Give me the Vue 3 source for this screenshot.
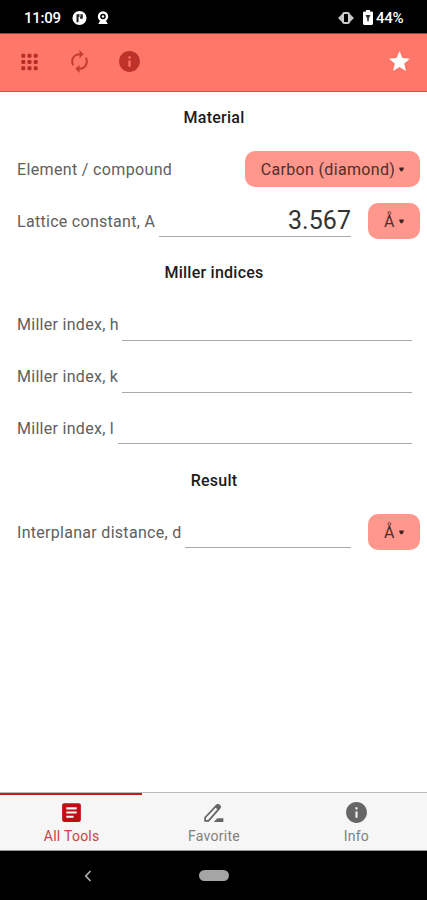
<script setup>
const rows = [
  { kind: 'title', label: 'Material' },
  { kind: 'select', label: 'Element / compound', unit: 'Carbon (diamond)' },
  { kind: 'field', label: 'Lattice constant, A', value: '3.567', unit: 'Å' },
  { kind: 'title', label: 'Miller indices' },
  { kind: 'field', label: 'Miller index, h' },
  { kind: 'field', label: 'Miller index, k' },
  { kind: 'field', label: 'Miller index, l' },
  { kind: 'title', label: 'Result' },
  { kind: 'field', label: 'Interplanar distance, d', unit: 'Å' }
]
</script>

<template>
  <div class="screen">
    <div class="status">
      <span class="time">11:09</span>
      <svg class="s1" width="15" height="16" viewBox="0 0 16 16"><circle cx="8" cy="8" r="7.500" fill="#fff" /><path d="M4.800 4h6.700v4.800H8.600V6.600H7V12.500H4.800z" fill="#222" /><path d="M8 4h1v2.600H8z" fill="#fff" /></svg>
      <svg class="s2" width="12" height="14" viewBox="0 0 12 14"><circle cx="6" cy="5.500" r="4" fill="none" stroke="#fff" stroke-width="2.400" /><circle cx="6" cy="5.500" r="1.200" fill="#fff" /><path d="M1.200 12.900 3 10h6l1.800 2.900z" fill="#fff" /></svg>
      <span class="grow"></span>
      <svg class="s3" width="16" height="12" viewBox="0 0 16 12"><path d="M0 6 4.500 1.500v9zM16 6l-4.500-4.500v9z" fill="#c4c4c4" /><rect x="5" y="1" width="6" height="10" rx="1.500" fill="#000" stroke="#ccc" stroke-width="2" /></svg>
      <svg class="s4" width="10" height="15" viewBox="0 0 10 15"><path d="M3 0h4v1.600h1.800q1.200 0 1.200 1.200v10.800Q10 15 8.800 15H1.200Q0 15 0 13.600V2.800q0-1.200 1.200-1.200H3z" fill="#fff" /><path d="M2.500 5h5L5.800 8.600v2.600H4.200V8.600z" fill="#333" /></svg>
      <span class="battery">44%</span>
    </div>

    <header class="bar">
      <svg width="25" height="24" viewBox="0 0 24 24" fill="#b72c24"><template v-for="y in 3" :key="y"><rect v-for="x in 3" :key="x" :x="x * 6.200 - 2.400" :y="y * 6.200 - 2.400" width="4" height="4" rx="1.200" /></template></svg>
      <svg width="25" height="25" viewBox="0 0 24 24" fill="#c63d33"><path d="M12 6v3l4-4-4-4v3c-4.420 0-8 3.580-8 8 0 1.570.46 3.030 1.240 4.260L6.700 14.800c-.45-.83-.7-1.790-.7-2.800 0-3.310 2.690-6 6-6zm6.760 1.740L17.300 9.200c.44.84.7 1.790.7 2.800 0 3.310-2.690 6-6 6v-3l-4 4 4 4v-3c4.420 0 8-3.580 8-8 0-1.570-.46-3.030-1.240-4.260z" /></svg>
      <svg width="25" height="25" viewBox="0 0 24 24" fill="#be3329"><path d="M12 2C6.480 2 2 6.480 2 12s4.480 10 10 10 10-4.480 10-10S17.520 2 12 2zm1 15h-2v-6h2v6zm0-8h-2V7h2v2z" /></svg>
      <span class="grow"></span>
      <svg width="25" height="25" viewBox="0 0 24 24" fill="#fff"><path d="M12 17.270 18.180 21l-1.640-7.030L22 9.240l-7.190-.61L12 2 9.190 8.630 2 9.240l5.460 4.730L5.820 21z" /></svg>
    </header>

    <main>
      <div v-for="row in rows" :key="row.label" class="row" :class="[row.kind, { wide: !row.unit }]">
        <span class="label">{{ row.label }}</span>
        <span v-if="row.kind === 'field'" class="input">{{ row.value }}</span>
        <button v-if="row.unit" class="chip" :class="{ big: row.kind === 'select' }">{{ row.unit }}<svg width="5" height="5" viewBox="0 0 5 5"><path d="M.3.500h4.400v1.500L3.300 4.200H1.700L.3 2z" fill="#40201e" /></svg></button>
      </div>
    </main>

    <nav>
      <div class="tab active">
        <svg width="25" height="25" viewBox="0 0 24 24"><path d="M19 3H5c-1.100 0-2 .9-2 2v14c0 1.100.9 2 2 2h14c1.100 0 2-.9 2-2V5c0-1.100-.9-2-2-2zm-5 14H7v-2h7v2zm3-4H7v-2h10v2zm0-4H7V7h10v2z" fill="#bc1015" /></svg>
        <span>All Tools</span>
      </div>
      <div class="tab">
        <svg width="25" height="25" viewBox="0 0 24 24" fill="none" stroke="#666" stroke-width="1.700"><path d="M4 20v-3.200L15 5.200q1.200-1.200 2.300-.1l.5.500q1 1.100 0 2.200L7.200 20z" /><path d="m13.800 6.500 1.500-1.500q1-1 2-.1l.6.600q1 1 .1 2L16.500 9z" fill="#666" stroke-width="1" /><path d="M12.200 21l3.500-3.500h5.800V21z" fill="#666" stroke="none" /></svg>
        <span>Favorite</span>
      </div>
      <div class="tab">
        <svg width="25" height="25" viewBox="0 0 24 24"><path d="M12 2C6.480 2 2 6.480 2 12s4.480 10 10 10 10-4.480 10-10S17.520 2 12 2zm1 15h-2v-6h2v6zm0-8h-2V7h2v2z" fill="#666" /></svg>
        <span>Info</span>
      </div>
    </nav>

    <div class="system">
      <svg width="8" height="12" viewBox="0 0 8 12"><path d="M6.500 1 1.800 6l4.700 5" fill="none" stroke="#aaa" stroke-width="1.800" /></svg>
      <span class="pill"></span>
      <span></span>
    </div>
  </div>
</template>

<style>
body { margin: 0; background: #fff; }
</style>

<style scoped>
* { box-sizing: border-box; }
.screen { width: 427px; height: 900px; display: flex; flex-direction: column; font-family: Roboto, "Liberation Sans", sans-serif; background: #fff; overflow: hidden; }
svg { display: block; flex: none; }
.grow { flex: 1; }
.status { height: 33px; flex: none; background: #000; color: #fff; display: flex; align-items: center; padding: 2px 23px 0 24px; font-size: 15px; font-weight: 500; }
.time { width: 38px; letter-spacing: -.25px; }
.s1 { margin-left: 10px; }
.s2 { margin-left: 10px; }
.s3 { margin-right: 9px; }
.s4 { margin-right: 3px; }
.battery { width: 28px; letter-spacing: -.3px; }
.bar { height: 59px; flex: none; background: #ff7769; border-top: 1px solid #9e4037; border-bottom: 1px solid #c65549; display: flex; align-items: center; padding: 0 15px 2px 17px; gap: 25px; }
main { flex: 1; }
.row { height: 51.85px; display: flex; align-items: center; padding: 0 7px 0 17px; }
.row:first-child { height: 51.35px; }
.label { font-size: 16px; letter-spacing: .29px; color: #606060; white-space: nowrap; }
.title { justify-content: center; padding: 0 0 0 1px; }
.title .label { font-weight: 500; font-size: 16px; letter-spacing: .25px; color: #1c1c1c; }
.select { justify-content: space-between; }
.select .label { letter-spacing: .35px; }
.wide.field { padding-right: 15px; }
.input { flex: 1; height: 32px; margin-left: 3.500px; border-bottom: 1px solid #aaa; text-align: right; font-size: 25px; line-height: 31px; letter-spacing: .05px; color: #333; }
.chip { width: 52px; height: 36px; flex: none; margin-left: 17px; border: 0; border-radius: 10px; background: #ff978d; color: #50302e; font-family: inherit; font-size: 16px; letter-spacing: .33px; padding: 0; display: flex; align-items: center; justify-content: center; gap: 4px; white-space: nowrap; }
.big { width: 175px; }
nav { height: 59px; flex: none; display: flex; background: #f6f6f6; border-top: 1px solid #bbb; border-bottom: 1px solid #999; }
.tab { flex: 1; display: flex; flex-direction: column; align-items: center; padding: 5px 0 0 1px; border-top: 2px solid transparent; color: #808080; font-size: 14px; line-height: 18px; letter-spacing: .25px; }
.tab span { margin-top: 2px; }
.active { border-color: #c9171c; color: #c94444; }
.system { height: 49px; flex: none; background: #000; display: grid; grid-template-columns: 176px 76px 1fr; justify-items: center; align-items: center; }
.pill { width: 30px; height: 11px; border-radius: 6px; background: #a5a5a5; }
</style>
